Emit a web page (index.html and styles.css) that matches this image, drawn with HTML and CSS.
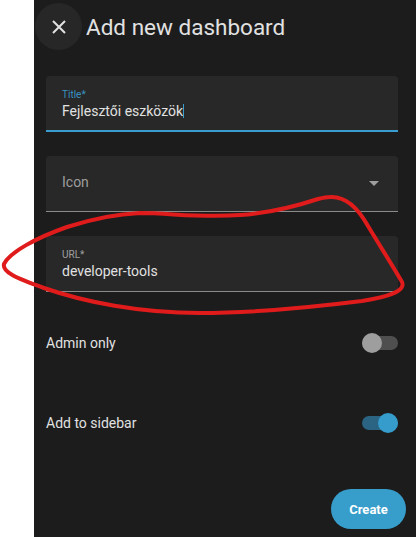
FILE: index.html
```html
<!DOCTYPE html>
<html lang="en">
<head>
<meta charset="utf-8">
<title>Add new dashboard</title>
<link rel="stylesheet" href="styles.css">
</head>
<body>
<div class="dialog">
  <div class="header">
    <button class="close" aria-label="Close">
      <svg width="14" height="14" viewBox="0 0 14 14"><path d="M1 1 L13 13 M13 1 L1 13" stroke="#e1e1e1" stroke-width="2" fill="none"/></svg>
    </button>
    <h1 class="title">Add new dashboard</h1>
  </div>
  <div class="content">
    <div class="field focused">
      <div class="label">Title*</div>
      <div class="value">Fejlesztői eszközök<span class="caret"></span></div>
    </div>
    <div class="field select">
      <div class="placeholder">Icon</div>
      <span class="arrow"></span>
    </div>
    <div class="field">
      <div class="label label-muted">URL*</div>
      <div class="value">developer-tools</div>
    </div>
    <div class="row first">
      <span class="row-text">Admin only</span>
      <span class="switch"><span class="track"></span><span class="knob"></span></span>
    </div>
    <div class="row">
      <span class="row-text">Add to sidebar</span>
      <span class="switch on"><span class="track"></span><span class="knob"></span></span>
    </div>
  </div>
  <div class="actions">
    <button class="create">Create</button>
  </div>
</div>
<svg class="scribble" width="416" height="537" viewBox="0 0 416 537">
  <path d="M330 197 C346 196 358 208 368 226 C380 246 394 268 402 282 C406 291 388 297 362 301 C322 306 262 313 200 313 C140 313 84 302 44 288 C16 278 2 272 4 264 C10 252 36 238 67 227 C92 219 116 214 140 213 C170 213 200 218 240 215 C270 213 300 205 318 199 C322 198 326 197 330 197 Z" fill="none" stroke="#e01b1b" stroke-width="4" stroke-linejoin="round"/>
</svg>
</body>
</html>
```

FILE: styles.css
```css
* { box-sizing: border-box; }
html, body { margin: 0; padding: 0; }
body {
  background: #ffffff;
  width: 416px;
  height: 537px;
  overflow: hidden;
  font-family: Roboto, "Noto Sans", sans-serif;
  position: relative;
}
.dialog {
  margin-left: 34px;
  width: 382px;
  height: 537px;
  background: #1c1c1c;
  display: flex;
  flex-direction: column;
}
.header {
  display: flex;
  align-items: center;
  padding: 3px 0 0 1px;
  height: 50px;
}
.close {
  width: 47px;
  height: 47px;
  border-radius: 50%;
  border: none;
  background: #272727;
  display: flex;
  align-items: center;
  justify-content: center;
  padding: 0;
}
.title {
  margin: 0 0 0 4px;
  font-size: 22.5px;
  font-weight: 400;
  color: #e1e1e1;
  line-height: 28px;
}
.content {
  padding: 26px 18px 0 12px;
  display: flex;
  flex-direction: column;
}
.field {
  height: 56px;
  background: #282828;
  border-radius: 4px 4px 0 0;
  border-bottom: 1px solid #8a8a8a;
  padding: 13px 0 0 16px;
  margin-bottom: 24px;
}
.field.focused { border-bottom: 2px solid #3a9dcf; }
.label {
  font-size: 10px;
  line-height: 12px;
  color: #3a92c0;
}
.label-muted { color: #a0a0a0; }
.value {
  margin-top: 1px;
  font-size: 14px;
  line-height: 18px;
  color: #e1e1e1;
  display: flex;
  align-items: center;
}
.caret {
  display: inline-block;
  width: 1px;
  height: 14px;
  background: #3a9dcf;
}
.field.select {
  display: flex;
  justify-content: space-between;
  align-items: flex-start;
  padding: 17px 19px 0 16px;
}
.placeholder {
  font-size: 14px;
  line-height: 18px;
  color: #9e9e9e;
}
.arrow {
  margin-top: 8px;
  width: 0;
  height: 0;
  border-left: 5px solid transparent;
  border-right: 5px solid transparent;
  border-top: 5px solid #9e9e9e;
}
.row {
  height: 40px;
  display: flex;
  align-items: center;
  justify-content: space-between;
  margin-top: 40px;
}
.row.first { margin-top: 7px; }
.row-text {
  font-size: 14px;
  color: #e1e1e1;
}
.switch {
  position: relative;
  width: 36px;
  height: 20px;
  display: block;
}
.track {
  position: absolute;
  left: 0;
  top: 3px;
  width: 36px;
  height: 14px;
  border-radius: 7px;
  background: #4f4f4f;
}
.knob {
  position: absolute;
  left: 0;
  top: 0;
  width: 20px;
  height: 20px;
  border-radius: 50%;
  background: #9e9e9e;
}
.switch.on .track { background: #2b6382; }
.switch.on .knob { left: 16px; background: #359ccb; }
.actions {
  display: flex;
  justify-content: flex-end;
  padding: 46px 10px 0 0;
}
.create {
  width: 75px;
  height: 40px;
  border-radius: 20px;
  border: none;
  background: #379dcb;
  color: #ffffff;
  font-family: Roboto, "Noto Sans", sans-serif;
  font-size: 13px;
  font-weight: 700;
  padding: 0;
}
.scribble {
  position: absolute;
  left: 0;
  top: 0;
  pointer-events: none;
}
```
